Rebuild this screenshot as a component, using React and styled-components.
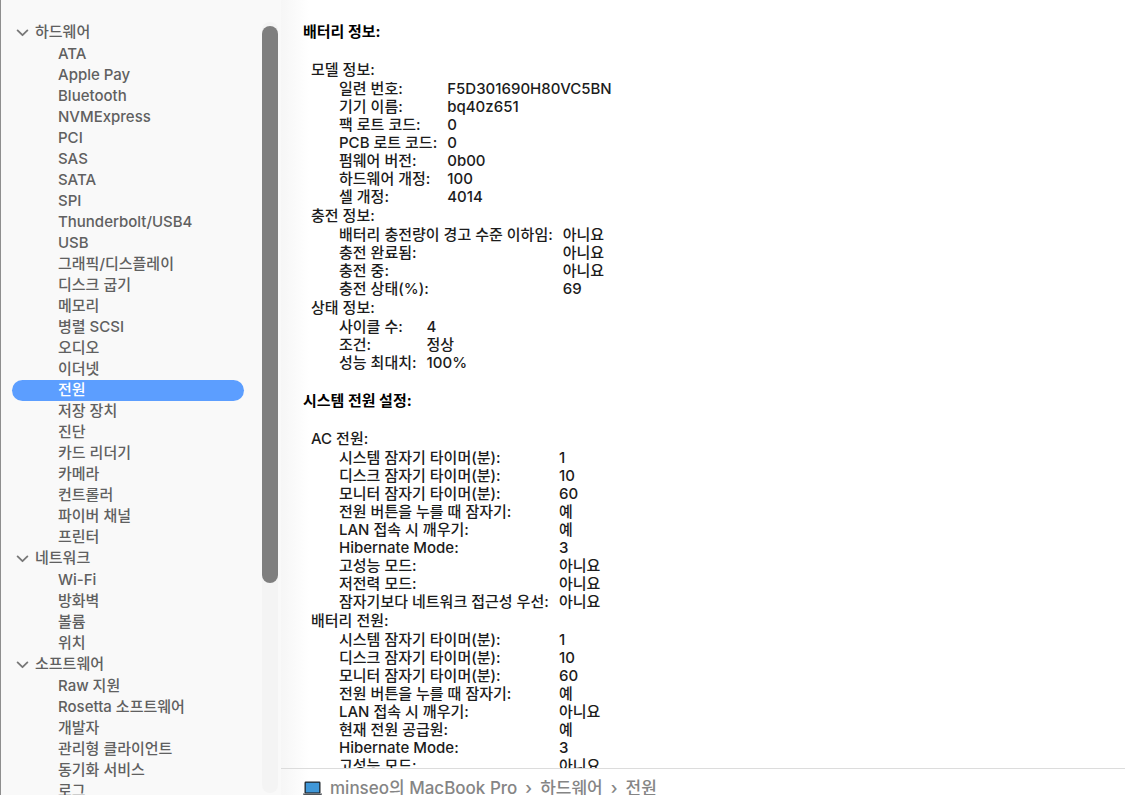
import React, { useState } from "react";
import styled, { createGlobalStyle } from "styled-components";

const GlobalStyle = createGlobalStyle`
	* {
		box-sizing: border-box;
	}
	body {
		margin: 0;
		background: #fff;
		font-family: Inter, "Noto Sans CJK KR", sans-serif;
		font-size: 15px;
		font-weight: 500;
	}
`;

const Window = styled.div`
	display: flex;
	height: 100vh;
	overflow: hidden;
	border-left: 1px solid #8e8e8e;
`;

const Sidebar = styled.aside`
	display: flex;
	flex: 0 0 280px;
	padding-top: 22px;
	overflow: hidden;
	background: #f9f9f9;
`;

const Nav = styled.nav`
	flex: 1;
	padding-left: 11px;
`;

const Group = styled.section`
	width: 232px;
`;

const GroupButton = styled.button`
	display: flex;
	align-items: center;
	gap: 6px;
	width: 100%;
	height: 22px;
	padding: 0 0 2px 4px;
	border: 0;
	background: none;
	color: #606060;
	font: inherit;
	line-height: 20px;
	text-align: left;
`;

const List = styled.ul`
	margin: 0;
	padding: 0;
	list-style: none;
`;

const ItemLink = styled.a`
	display: block;
	height: 21px;
	padding-left: 46px;
	border-radius: 11px;
	background: ${(props) => (props.$active ? "#5c9eff" : "none")};
	color: ${(props) => (props.$active ? "#fff" : "#606060")};
	line-height: 20px;
	text-decoration: none;
	white-space: nowrap;
`;

const Track = styled.div`
	width: 16px;
	height: calc(100% - 2px);
	margin-right: 3px;
	padding-top: 4px;
	border-radius: 8px;
	background: #f4f4f4;
`;

const Thumb = styled.div`
	height: 557px;
	border-radius: 8px;
	background: #7f7f7f;
`;

const Main = styled.main`
	display: flex;
	flex: 1;
	flex-direction: column;
	min-width: 0;
	background: linear-gradient(to right, #f6f6f6, #fff 28px);
`;

const Report = styled.div`
	flex: 1;
	min-height: 0;
	padding: 23px 22px 0;
	overflow: hidden;
	color: #1c1c1c;
	line-height: 18px;
`;

const Title = styled.h2`
	margin: 0 0 20px;
	color: #000;
	font-size: 15px;
	font-weight: 700;
`;

const Part = styled.div`
	margin-bottom: 20px;
`;

const Block = styled.section`
	margin: 0 0 1px 8px;
`;

const BlockTitle = styled.h3`
	margin: 0 0 1px;
	font-size: 15px;
	font-weight: 500;
`;

const Table = styled.table`
	margin-left: 28px;
	border-collapse: collapse;

	th,
	td {
		height: 18px;
		padding: 0;
		font-weight: 500;
		text-align: left;
		white-space: nowrap;
	}

	th {
		min-width: ${(props) => (props.$wide ? "220px" : "0")};
		padding-right: 10px;
	}
`;

const PathBar = styled.footer`
	display: flex;
	flex: 0 0 27px;
	align-items: flex-start;
	gap: 8px;
	padding: 7px 22px 0;
	overflow: hidden;
	border-top: 1px solid #dcdcdc;
	color: #858585;
	font-size: 17px;
	line-height: 24px;
	white-space: nowrap;

	svg {
		margin-top: 5px;
	}
`;

const Crumbs = styled.div`
	display: flex;
	gap: 8px;
`;

const groups = [
	{
		name: "하드웨어",
		items: [
			"ATA",
			"Apple Pay",
			"Bluetooth",
			"NVMExpress",
			"PCI",
			"SAS",
			"SATA",
			"SPI",
			"Thunderbolt/USB4",
			"USB",
			"그래픽/디스플레이",
			"디스크 굽기",
			"메모리",
			"병렬 SCSI",
			"오디오",
			"이더넷",
			"전원",
			"저장 장치",
			"진단",
			"카드 리더기",
			"카메라",
			"컨트롤러",
			"파이버 채널",
			"프린터",
		],
	},
	{ name: "네트워크", items: ["Wi-Fi", "방화벽", "볼륨", "위치"] },
	{
		name: "소프트웨어",
		items: [
			"Raw 지원",
			"Rosetta 소프트웨어",
			"개발자",
			"관리형 클라이언트",
			"동기화 서비스",
			"로그",
		],
	},
];

const report = [
	{
		title: "배터리 정보:",
		blocks: [
			{
				title: "모델 정보:",
				rows: [
					["일련 번호:", "F5D301690H80VC5BN"],
					["기기 이름:", "bq40z651"],
					["팩 로트 코드:", "0"],
					["PCB 로트 코드:", "0"],
					["펌웨어 버전:", "0b00"],
					["하드웨어 개정:", "100"],
					["셀 개정:", "4014"],
				],
			},
			{
				title: "충전 정보:",
				rows: [
					["배터리 충전량이 경고 수준 이하임:", "아니요"],
					["충전 완료됨:", "아니요"],
					["충전 중:", "아니요"],
					["충전 상태(%):", "69"],
				],
			},
			{
				title: "상태 정보:",
				rows: [
					["사이클 수:", "4"],
					["조건:", "정상"],
					["성능 최대치:", "100%"],
				],
			},
		],
	},
	{
		title: "시스템 전원 설정:",
		blocks: [
			{
				title: "AC 전원:",
				wide: true,
				rows: [
					["시스템 잠자기 타이머(분):", "1"],
					["디스크 잠자기 타이머(분):", "10"],
					["모니터 잠자기 타이머(분):", "60"],
					["전원 버튼을 누를 때 잠자기:", "예"],
					["LAN 접속 시 깨우기:", "예"],
					["Hibernate Mode:", "3"],
					["고성능 모드:", "아니요"],
					["저전력 모드:", "아니요"],
					["잠자기보다 네트워크 접근성 우선:", "아니요"],
				],
			},
			{
				title: "배터리 전원:",
				wide: true,
				rows: [
					["시스템 잠자기 타이머(분):", "1"],
					["디스크 잠자기 타이머(분):", "10"],
					["모니터 잠자기 타이머(분):", "60"],
					["전원 버튼을 누를 때 잠자기:", "예"],
					["LAN 접속 시 깨우기:", "아니요"],
					["현재 전원 공급원:", "예"],
					["Hibernate Mode:", "3"],
					["고성능 모드:", "아니요"],
				],
			},
		],
	},
];

function Chevron() {
	return (
		<svg width="13" height="9" viewBox="0 0 13 9" fill="none" aria-hidden="true">
			<path
				d="M1.6 2.4 6.5 7.2l4.9-4.8"
				stroke="#777"
				strokeWidth="1.8"
				strokeLinecap="round"
				strokeLinejoin="round"
			/>
		</svg>
	);
}

function Laptop() {
	return (
		<svg width="19" height="15" viewBox="0 0 19 15" aria-hidden="true">
			<rect x="1.5" y="0.5" width="16" height="12" rx="1.2" fill="#20262c" />
			<rect x="2.8" y="1.8" width="13.4" height="9.6" fill="#3f97d8" />
			<path d="M0 12.4h19v.8q-.6 1-2 1H2q-1.4 0-2-1z" fill="#50555a" />
		</svg>
	);
}

export default function App() {
	const [selected, setSelected] = useState("전원");

	return (
		<Window>
			<GlobalStyle />
			<Sidebar>
				<Nav>
					{groups.map((group) => (
						<Group key={group.name}>
							<GroupButton type="button" aria-expanded="true">
								<Chevron />
								{group.name}
							</GroupButton>
							<List>
								{group.items.map((item) => (
									<li key={item}>
										<ItemLink
											href="#"
											$active={item === selected}
											onClick={() => setSelected(item)}
										>
											{item}
										</ItemLink>
									</li>
								))}
							</List>
						</Group>
					))}
				</Nav>
				<Track>
					<Thumb />
				</Track>
			</Sidebar>
			<Main>
				<Report>
					{report.map((part) => (
						<Part key={part.title}>
							<Title>{part.title}</Title>
							{part.blocks.map((block) => (
								<Block key={block.title}>
									<BlockTitle>{block.title}</BlockTitle>
									<Table $wide={block.wide}>
										<tbody>
											{block.rows.map(([label, value]) => (
												<tr key={label}>
													<th scope="row">{label}</th>
													<td>{value}</td>
												</tr>
											))}
										</tbody>
									</Table>
								</Block>
							))}
						</Part>
					))}
				</Report>
				<PathBar>
					<Laptop />
					<Crumbs>
						<span>minseo의 MacBook Pro</span>
						<span>›</span>
						<span>하드웨어</span>
						<span>›</span>
						<span>{selected}</span>
					</Crumbs>
				</PathBar>
			</Main>
		</Window>
	);
}
